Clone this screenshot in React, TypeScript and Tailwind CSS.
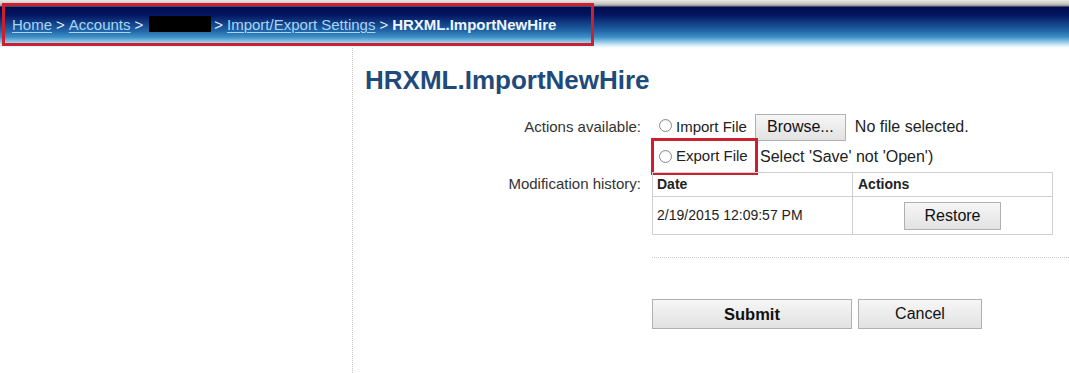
import React from "react";

function Radio() {
  return (
    <span className="inline-block h-[13px] w-[13px] shrink-0 rounded-full border border-[#8a8a8a] bg-white shadow-[inset_0_1px_1px_rgba(0,0,0,0.08)]" />
  );
}

const btn =
  "flex items-center justify-center border border-[#b0b0b0] bg-[linear-gradient(to_bottom,#f6f6f6,#e2e2e2)] text-[#111]";

export default function App() {
  return (
    <div className="h-[373px] w-[1069px] overflow-hidden bg-white font-['Liberation_Sans',Arial,sans-serif] text-[#222]">
      {/* header */}
      <div className="flex h-[48px] items-start bg-[linear-gradient(to_bottom,#e8e8e4_0px,#c4c4c0_4px,#8a8a8c_6px,#000a4e_7px,#031660_15px,#123f86_23px,#2266a8_31px,#3d8fc6_37px,#92cbe8_42px,#dff3fb_46px,#ffffff_48px)] pl-[2px] pt-[3px]">
        <div className="flex h-[43px] w-[592px] items-center border-[3px] border-[#cc2030] pl-[7px] pb-[1px] text-[15px] leading-none text-[#e4eefa]">
          <span className="text-[#a8d6f6] underline decoration-1 underline-offset-2">Home</span>
          <span className="mx-[4px]">&gt;</span>
          <span className="text-[#a8d6f6] underline decoration-1 underline-offset-2">Accounts</span>
          <span className="ml-[4px]">&gt;</span>
          <span className="ml-[6px] inline-block h-[16px] w-[62px] bg-black" />
          <span className="ml-[3px] mr-[4px]">&gt;</span>
          <span className="text-[#a8d6f6] underline decoration-1 underline-offset-2">Import/Export Settings</span>
          <span className="mx-[4px]">&gt;</span>
          <span className="font-bold text-[#eef6ff]">HRXML.ImportNewHire</span>
        </div>
      </div>

      {/* body */}
      <div className="flex h-[325px]">
        <div className="w-[353px] shrink-0 border-r border-dotted border-[#c8c8c8]" />
        <div className="flex-1">
          <h1 className="ml-[12px] mt-[17px] text-[26px] font-bold leading-[30px] text-[#1f4a7c]">
            HRXML.ImportNewHire
          </h1>

          <div className="mt-[18px] grid grid-cols-[288px_1fr] gap-x-[11px] text-[14px]">
            {/* row 1 */}
            <div className="flex h-[28px] items-center justify-end text-[15px] text-[#333]">Actions available:</div>
            <div className="flex h-[28px] items-center text-[15px]">
              <span className="ml-[7px]">
                <Radio />
              </span>
              <span className="ml-[4px] text-[15px]">Import File</span>
              <div className={`${btn} ml-[8px] h-[27px] w-[91px] text-[16px]`}>Browse...</div>
              <span className="ml-[9px] text-[16px] text-[#222]">No file selected.</span>
            </div>

            {/* row 2 */}
            <div className="h-[31px]" />
            <div className="flex h-[31px] items-center text-[15px]">
              <div className="-ml-[1px] flex h-[37px] w-[107px] shrink-0 items-center border-[3px] border-[#cc2030] pl-[5px]">
                <Radio />
                <span className="ml-[4px] text-[15px]">Export File</span>
              </div>
              <span className="ml-[2px] text-[16px]">Select 'Save' not 'Open')</span>
            </div>

            {/* row 3 */}
            <div className="flex h-[25px] items-center justify-end text-[15px] text-[#333]">Modification history:</div>
            <div>
              <div className="w-[401px] border border-[#cfcfcf]">
                <div className="flex h-[24px] border-b border-[#cfcfcf] font-bold">
                  <div className="flex w-[200px] items-center border-r border-[#cfcfcf] pl-[4px]">Date</div>
                  <div className="flex flex-1 items-center pl-[5px]">Actions</div>
                </div>
                <div className="flex h-[37px]">
                  <div className="flex w-[200px] items-center border-r border-[#cfcfcf] pl-[4px]">
                    2/19/2015 12:09:57 PM
                  </div>
                  <div className="flex flex-1 items-center justify-center">
                    <div className={`${btn} h-[28px] w-[97px] text-[16px]`}>Restore</div>
                  </div>
                </div>
              </div>
              <div className="mt-[22px] border-t border-dotted border-[#c8c8c8]" />
              <div className="mt-[41px] flex gap-[6px]">
                <div className={`${btn} h-[30px] w-[200px] text-[16.5px] font-bold`}>Submit</div>
                <div className={`${btn} h-[30px] w-[124px] text-[16px]`}>Cancel</div>
              </div>
            </div>
          </div>
        </div>
      </div>
    </div>
  );
}
